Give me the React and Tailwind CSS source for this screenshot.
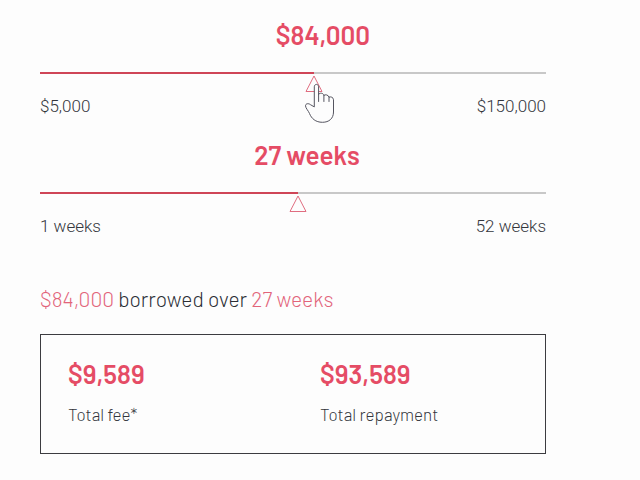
import React, { useState } from "react";

const WEEKLY_RATE = 0.004228;

const formatMoney = (value) => "$" + Math.round(value).toLocaleString("en-US");

const HandPointer = () => (
  <svg
    className="absolute top-[11px] -left-[9px] z-10 pointer-events-none"
    width="30"
    height="40"
    viewBox="0 0 30 40"
    fill="#fdfdfd"
    stroke="#555560"
    strokeWidth="1"
    strokeLinecap="round"
    strokeLinejoin="round"
    aria-hidden="true"
  >
    <path d="M9.3 23.5V3.8C9.3 .6 13.6 .6 13.6 3.8V11.5C14.3 9.6 18.6 9.8 18.9 12.4C20 11.2 23.5 11.8 24 14.2C25.5 13.3 28.5 14.3 28.5 16.8V29C28.5 35.5 24 39.3 17.5 39.3C10.5 39.3 6.5 35.5 4.5 30.5C3.5 28 .5 25 .5 22.8C.5 20.5 3.5 20 5.3 21.5Z" />
    <path d="M13.6 11V18.5M18.9 12.4V18.5M24 14.2V18.5" />
  </svg>
);

const RangeField = ({ id, label, title, value, min, max, step, minLabel, maxLabel, onChange, pointer }) => {
  const percent = ((value - min) / (max - min)) * 100;

  return (
    <div className="h-[120px]">
      {/* The title travels with the thumb */}
      <label
        htmlFor={id}
        aria-label={label}
        className="block w-max -translate-x-1/2 text-[26px] leading-8 font-semibold text-[#e54c65]"
        style={{ marginLeft: `calc(${percent}% + 9px)` }}
      >
        {title}
      </label>

      {/* Track */}
      <div className="relative mt-[21px] h-0.5 bg-[#c8c8c8]">
        <div className="h-full bg-[#cf4557]" style={{ width: `${percent}%` }} />
        <div className="absolute top-0 w-0" style={{ left: `${percent}%` }}>
          <svg
            className="absolute top-[3px] -left-[9px]"
            width="18"
            height="18"
            viewBox="0 0 18 18"
            fill="none"
            stroke="#e06d80"
            aria-hidden="true"
          >
            <path d="M9 1L17 16.5H1Z" />
          </svg>
          {pointer && <HandPointer />}
        </div>
        <input
          id={id}
          type="range"
          min={min}
          max={max}
          step={step}
          value={value}
          onChange={(e) => onChange(Number(e.target.value))}
          className="absolute -top-1 left-0 w-full h-6 opacity-0 cursor-pointer"
        />
      </div>

      <div className="mt-5 flex justify-between font-['Roboto',sans-serif] text-[17px] leading-6 font-light text-[#33363c]">
        <span>{minLabel}</span>
        <span>{maxLabel}</span>
      </div>
    </div>
  );
};

const Total = ({ amount, label }) => (
  <div className="px-[27px]">
    <dd className="text-[26px] leading-8 font-semibold text-[#e54c65]">{amount}</dd>
    <dt className="mt-3 text-[17px] leading-6 font-light text-[#33363c]">{label}</dt>
  </div>
);

const App = () => {
  const [amount, setAmount] = useState(83500);
  const [weeks, setWeeks] = useState(27);

  // the loan is quoted in whole thousands
  const borrowed = Math.round(amount / 1000) * 1000;
  const fee = borrowed * weeks * WEEKLY_RATE;

  return (
    <main className="min-h-screen bg-[#fdfdfd] pl-10 pr-[94px] pt-[19px] font-['Barlow','Roboto',sans-serif]">
      <RangeField
        id="amount"
        label="Loan amount"
        title={formatMoney(borrowed)}
        value={amount}
        min={5000}
        max={150000}
        step={500}
        minLabel="$5,000"
        maxLabel="$150,000"
        onChange={setAmount}
        pointer
      />
      <RangeField
        id="weeks"
        label="Loan term"
        title={`${weeks} weeks`}
        value={weeks}
        min={1}
        max={52}
        step={1}
        minLabel="1 weeks"
        maxLabel="52 weeks"
        onChange={setWeeks}
      />

      <p className="mt-6 text-[21px] leading-8 font-light text-[#2b2e35]">
        <span className="text-[#e2647a]">{formatMoney(borrowed)}</span> borrowed over{" "}
        <span className="text-[#e2647a]">{weeks} weeks</span>
      </p>

      <dl className="mt-[19px] grid grid-cols-2 border border-[#3c3c40] pt-[23px] pb-[27px]">
        <Total amount={formatMoney(fee)} label="Total fee*" />
        <Total amount={formatMoney(borrowed + fee)} label="Total repayment" />
      </dl>
    </main>
  );
};

export default App;
